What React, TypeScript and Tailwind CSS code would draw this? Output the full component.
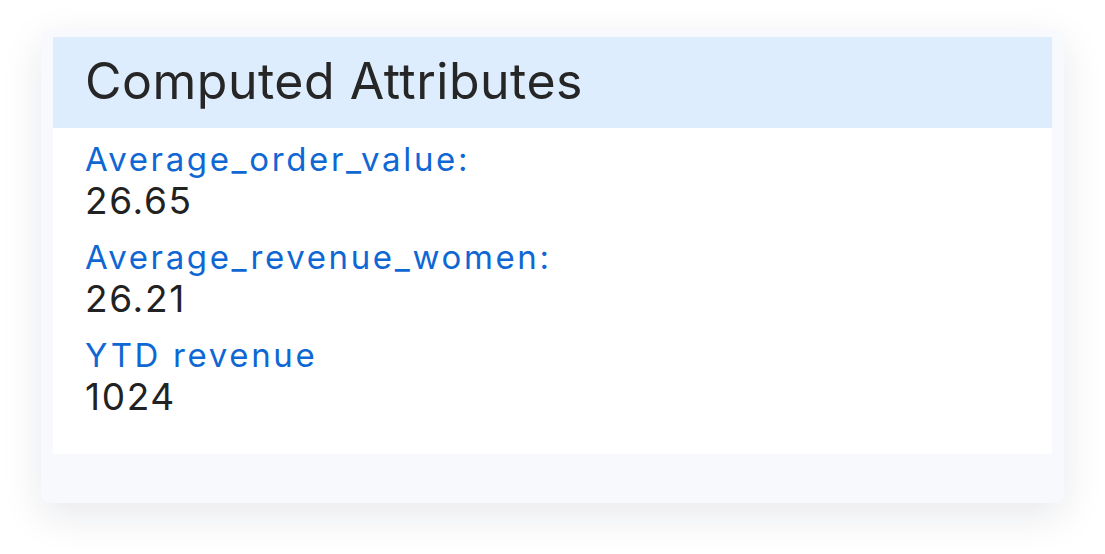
const attributes = [
  { label: "Average_order_value:", value: "26.65" },
  { label: "Average_revenue_women:", value: "26.21" },
  { label: "YTD revenue", value: "1024" },
];

export default function App() {
  return (
    <div className="min-h-[554px] bg-white pt-[30px] pl-[41px] font-['Inter',sans-serif]">
      <div className="w-[1023px] rounded-lg bg-[#f8f9fc] px-[12px] pt-[7px] pb-[49px] shadow-[0_12px_40px_rgba(20,30,60,0.10)]">
        <div className="bg-white">
          <div className="h-[91px] bg-[#ddedfd] px-[32px] pt-[19px]">
            <h2 className="text-[50px] leading-[50px] tracking-[0.01em] text-[#262626]">Computed Attributes</h2>
          </div>
          <div className="flex flex-col gap-[14px] px-[32px] pt-[11px] pb-[35px]">
            {attributes.map((attr) => (
              <div key={attr.label}>
                <div className="text-[33px] leading-[40px] tracking-[0.08em] text-[#0f67d4]">{attr.label}</div>
                <div className="text-[37px] leading-[44px] tracking-[0.045em] text-[#222]">{attr.value}</div>
              </div>
            ))}
          </div>
        </div>
      </div>
    </div>
  );
}
